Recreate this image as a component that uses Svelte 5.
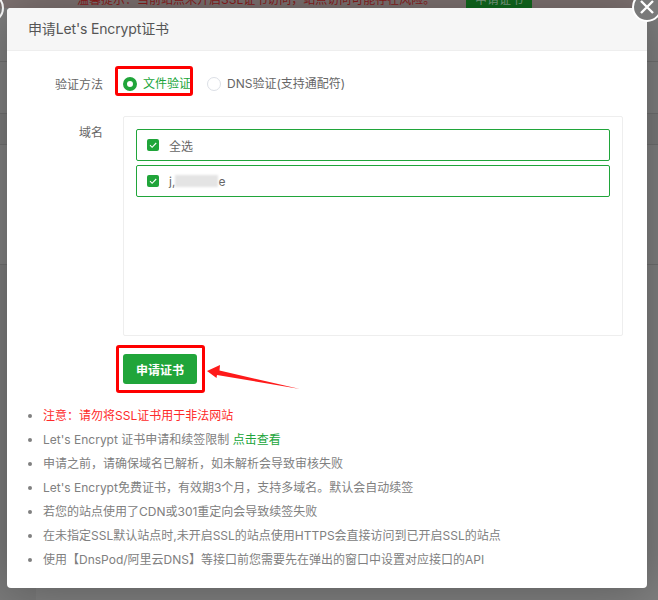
<script lang="ts">
	let method = $state('file');

	const domains = [{ id: 'all', label: '全选' }];

	const notes = [
		'申请之前，请确保域名已解析，如未解析会导致审核失败',
		"Let's Encrypt免费证书，有效期3个月，支持多域名。默认会自动续签",
		'若您的站点使用了CDN或301重定向会导致续签失败',
		'在未指定SSL默认站点时,未开启SSL的站点使用HTTPS会直接访问到已开启SSL的站点',
		'使用【DnsPod/阿里云DNS】等接口前您需要先在弹出的窗口中设置对应接口的API'
	];
</script>

<div class="page">
	<div class="behind">
		<div class="notice">
			<span class="notice-text">温馨提示：当前站点未开启SSL证书访问，站点访问可能存在风险。</span>
			<span class="notice-btn">申请证书</span>
		</div>
		<div class="bg-row r1"></div>
		<div class="bg-row r2"></div>
		<div class="bg-row r3"></div>
		<div class="bg-row r4"></div>
		<div class="rest"><div class="side"></div></div>
	</div>

	<span class="prev-close"></span>

	<div class="modal">
		<button class="close" aria-label="关闭">
			<svg viewBox="0 0 16 16" width="16" height="16" fill="none" stroke="#fff" stroke-width="2.4">
				<path d="M2 2l12 12M14 2L2 14" />
			</svg>
		</button>
		<div class="title">申请Let's Encrypt证书</div>

		<div class="body">
			<div class="row method">
				<span class="label">验证方法</span>
				<div class="radios">
					<label class="radio marked" class:on={method === 'file'}>
						<input type="radio" bind:group={method} value="file" />
						<span class="dot"></span>
						文件验证
					</label>
					<label class="radio" class:on={method === 'dns'}>
						<input type="radio" bind:group={method} value="dns" />
						<span class="dot"></span>
						DNS验证(支持通配符)
					</label>
				</div>
			</div>

			<div class="row domains">
				<span class="label">域名</span>
				<div class="domain-box">
					{#each domains as d (d.id)}
						<div class="domain">
							<span class="check">
								<svg viewBox="0 0 12 12" width="12" height="12" fill="none" stroke="#fff" stroke-width="1.1">
									<path d="M3 6.2l2.1 2.1L9.2 4" />
								</svg>
							</span>
							<span class="name">{d.label}</span>
						</div>
					{/each}
					<div class="domain">
						<span class="check">
							<svg viewBox="0 0 12 12" width="12" height="12" fill="none" stroke="#fff" stroke-width="1.1">
								<path d="M3 6.2l2.1 2.1L9.2 4" />
							</svg>
						</span>
						<span class="name">j,<span class="smudge"></span>e</span>
					</div>
				</div>
			</div>

			<div class="submit">
				<button class="apply">申请证书</button>
				<svg class="arrow" viewBox="0 0 96 30" width="96" height="30">
					<path d="M1 9L14 3L13.5 8.5L94 27L11 13L10.5 16Z" fill="#fe1a1a" />
				</svg>
			</div>

			<ul class="notes">
				<li class="danger">注意：请勿将SSL证书用于非法网站</li>
				<li>Let's Encrypt 证书申请和续签限制 <a href="#top" class="link">点击查看</a></li>
				{#each notes as n}
					<li>{n}</li>
				{/each}
			</ul>
		</div>
	</div>
</div>

<style>
	:global(body) {
		margin: 0;
	}

	.page {
		position: relative;
		width: 658px;
		height: 600px;
		overflow: hidden;
		background: #7f7f7f;
		font-family: Inter, "Noto Sans CJK SC", sans-serif;
		font-size: 12px;
		color: #666;
	}

	.behind {
		display: flex;
		flex-direction: column;
		height: 600px;
	}

	.notice {
		display: flex;
		flex: none;
		height: 8px;
		padding-left: 77px;
		background: #7f7372;
		overflow: hidden;
	}

	.notice-text {
		margin-top: -8px;
		width: 389px;
		line-height: 16px;
		color: #8a1c1c;
		white-space: nowrap;
	}

	.notice-btn {
		margin-top: -9px;
		width: 66px;
		height: 17px;
		line-height: 17px;
		text-align: center;
		background: #106a1d;
		color: #7f9f85;
	}

	.bg-row {
		flex: none;
		border-bottom: 1px solid #6f6f6f;
	}

	.r1 {
		height: 53px;
	}

	.r2 {
		height: 51px;
	}

	.r3 {
		height: 30px;
		background: #7a7a7a;
	}

	.r4 {
		height: 119px;
	}

	.rest {
		flex: 1;
		display: flex;
	}

	.side {
		width: 36px;
		background: #7a7a7a;
	}

	.prev-close {
		position: absolute;
		left: -26px;
		top: -7px;
		width: 26px;
		height: 26px;
		border: 2px solid #fff;
		border-radius: 50%;
	}

	.modal {
		position: absolute;
		left: 7px;
		top: 8px;
		width: 640px;
		height: 580px;
		background: #fff;
		border-radius: 4px;
		box-shadow: 1px 1px 50px rgba(0, 0, 0, 0.3);
	}

	.close {
		position: absolute;
		right: -15px;
		top: -16px;
		width: 30px;
		height: 30px;
		padding: 0;
		display: flex;
		align-items: center;
		justify-content: center;
		background: #7a7a7a;
		border: 2px solid #fff;
		border-radius: 50%;
	}

	.title {
		height: 42px;
		line-height: 42px;
		padding-left: 21px;
		background: #f6f6f6;
		border-bottom: 1px solid #eee;
		border-radius: 4px 4px 0 0;
		font-size: 14px;
		letter-spacing: -0.15px;
		color: #555;
	}

	.body {
		padding-top: 17px;
	}

	.row {
		display: flex;
	}

	.label {
		width: 96px;
		text-align: right;
		color: #666;
		flex: none;
	}

	.method {
		height: 30px;
		align-items: center;
		margin-bottom: 18px;
	}

	.radios {
		display: flex;
		margin: 1px 0 0 20px;
		gap: 16px;
	}

	.radio {
		position: relative;
		display: flex;
		align-items: center;
		gap: 6px;
		line-height: 18px;
		color: #666;
	}

	.radio input {
		display: none;
	}

	.dot {
		width: 14px;
		height: 14px;
		box-sizing: border-box;
		border: 1px solid #dcdfe6;
		border-radius: 50%;
		background: #fff;
	}

	.radio.on {
		color: #20a53a;
	}

	.radio.on .dot {
		border: 4.5px solid #20a53a;
	}

	/* red annotation around the chosen method */
	.marked::after {
		content: "";
		position: absolute;
		left: -8px;
		top: -9px;
		width: 72px;
		height: 24px;
		border: 3px solid #fe0000;
		border-radius: 3px;
	}

	.domains .label {
		margin-top: 7px;
	}

	.domain-box {
		box-sizing: border-box;
		margin-left: 20px;
		width: 500px;
		height: 220px;
		padding: 12px;
		border: 1px solid #eee;
		border-radius: 2px;
	}

	.domain {
		box-sizing: border-box;
		display: flex;
		align-items: center;
		height: 32px;
		margin-bottom: 4px;
		padding-left: 10px;
		border: 1px solid #20a53a;
		border-radius: 2px;
	}

	.check {
		width: 12px;
		height: 12px;
		background: #20a53a;
		border-radius: 2px;
		display: flex;
	}

	.name {
		margin-left: 10px;
		display: flex;
		align-items: center;
		color: #666;
	}

	.smudge {
		width: 43px;
		height: 12px;
		background: #e4e4e4;
		filter: blur(1px);
	}

	.submit {
		position: relative;
		margin: 18px 0 0 116px;
		width: 74px;
		height: 30px;
	}

	.apply {
		display: block;
		width: 74px;
		height: 30px;
		padding: 0;
		border: none;
		border-radius: 3px;
		background: #20a53a;
		color: #fff;
		font: inherit;
		font-weight: 600;
	}

	/* red annotation around the submit button */
	.submit::after {
		content: "";
		position: absolute;
		left: -7px;
		top: -9px;
		width: 83px;
		height: 42px;
		border: 3px solid #fe0000;
		border-radius: 3px;
	}

	.arrow {
		position: absolute;
		left: 83px;
		top: 8px;
	}

	.notes {
		list-style: none;
		margin: 20px 0 0;
		padding: 0 0 0 36px;
	}

	.notes li {
		position: relative;
		height: 24px;
		line-height: 24px;
		color: #808080;
		white-space: nowrap;
	}

	.notes li::before {
		content: "";
		position: absolute;
		left: -15px;
		top: 10px;
		width: 4px;
		height: 4px;
		border-radius: 50%;
		background: #808080;
	}

	.notes .danger {
		color: #fe2a2a;
	}

	.link {
		color: #20a53a;
		text-decoration: none;
	}
</style>
